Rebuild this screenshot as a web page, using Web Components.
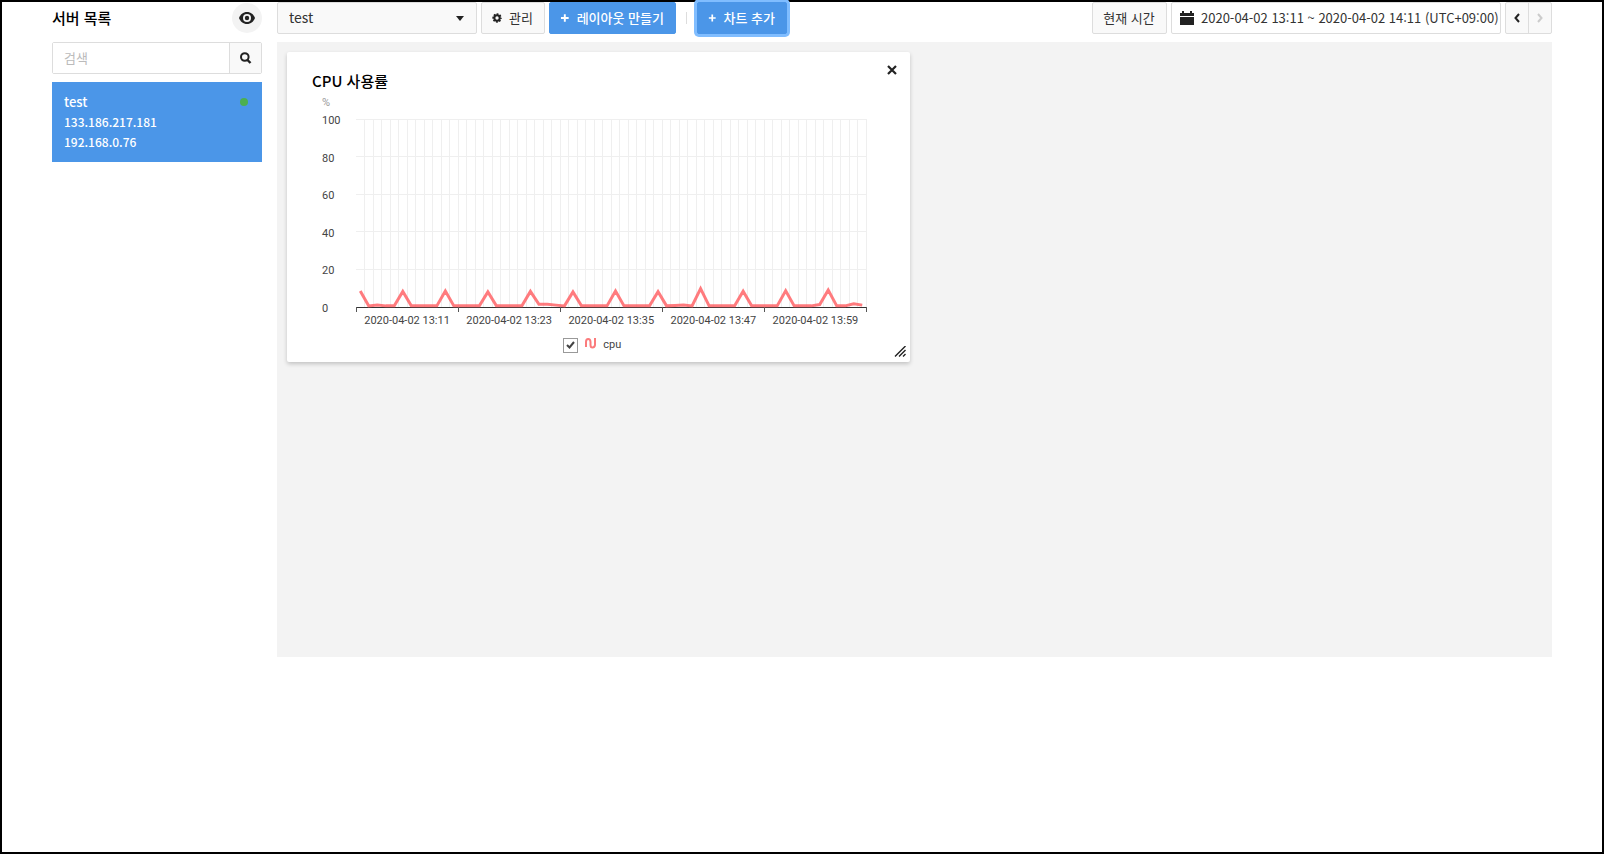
<!DOCTYPE html>
<html lang="ko">
<head>
<meta charset="utf-8">
<title>서버 모니터링</title>
<style>
html,body{margin:0;padding:0;background:#fff}
body{font-family:"Noto Sans CJK KR","Noto Sans",sans-serif;font-size:14px;line-height:20px;color:#333}
</style>
</head>
<body>
<monitor-app></monitor-app>
<script>
const base = `<style>
*{box-sizing:border-box}
button,input,select{font:inherit;color:inherit;margin:0}
svg{display:block}
button{cursor:pointer}
</style>`;

function define(name, html, setup) {
  const template = document.createElement('template');
  template.innerHTML = base + html;
  customElements.define(name, class extends HTMLElement {
    connectedCallback() {
      if (this.shadowRoot) return;
      this.attachShadow({ mode: 'open' }).append(template.content.cloneNode(true));
      if (setup) setup(this, this.shadowRoot);
    }
  });
}

define('ui-button', `<style>
:host{display:block}
button{display:flex;align-items:center;justify-content:center;gap:7px;width:100%;height:32px;padding:0 11px 1px 10px;border:1px solid #ddd;border-radius:2px;background:#f9f9f9;color:#333;font-size:13px;line-height:20px;white-space:nowrap}
:host([primary]) button{background:#4b96e8;border-color:#4b96e8;color:#fff;font-weight:500}
:host([active]) button{box-shadow:0 0 0 3px #80bdff}
</style><button type="button"><slot name="icon"></slot><slot></slot></button>`);

define('server-item', `<style>
:host{display:block;background:#4b96e8;color:#fff;padding:10px 12px;font-weight:500}
.name{display:flex;justify-content:space-between;align-items:center;font-size:13px;line-height:20px}
.dot{width:8px;height:8px;border-radius:50%;background:#4caf50;margin-right:2px}
.ip{font-size:12px;line-height:20px}
</style><div class="name"><slot name="name"></slot><span class="dot"></span></div><div class="ip"><slot name="public"></slot></div><div class="ip"><slot name="private"></slot></div>`);

define('server-list', `<style>
:host{display:flex;flex-direction:column;gap:8px;width:210px;flex:none}
header{display:flex;justify-content:space-between;align-items:center;height:32px}
h1{margin:0;font-size:15px;line-height:20px;font-weight:500;color:#000}
.eye{width:30px;height:30px;border:0;border-radius:50%;background:#f3f3f3;padding:0;display:grid;place-items:center}
form{display:flex;height:32px;border:1px solid #ddd;border-radius:2px}
input{flex:1;min-width:0;border:0;padding:0 11px;font-size:13px;background:#fff;outline:0}
input::placeholder{color:#bbb;opacity:1}
.go{width:32px;border:0;border-left:1px solid #ddd;background:#f9f9f9;padding:0;display:grid;place-items:center}
</style>
<header><h1>서버 목록</h1><button class="eye" aria-label="보기"><svg width="18" height="14" viewBox="0 0 18 14"><path d="M9 1C5.200 1 2.200 3.600 1 7c1.200 3.400 4.200 6 8 6s6.800-2.600 8-6c-1.200-3.400-4.200-6-8-6z" fill="#222"/><circle cx="9" cy="7" r="4" fill="#f3f3f3"/><circle cx="9" cy="7" r="2.200" fill="#222"/></svg></button></header>
<form><input type="text" placeholder="검색" aria-label="검색"><button type="button" class="go" aria-label="서버 검색"><svg width="12" height="12" viewBox="0 0 12 12" fill="none" stroke="#222"><circle cx="4.800" cy="5" r="3.800" stroke-width="2"/><path d="M7 7.500L10.500 11" stroke-width="2.400"/></svg></button></form>
<slot></slot>`);

define('layout-toolbar', `<style>
:host{display:flex;justify-content:space-between;height:32px;gap:8px}
.group{display:flex;gap:4px}
.select{display:flex;align-items:center;position:relative}
select{appearance:none;width:200px;height:32px;border:1px solid #ddd;border-radius:2px;background:#f9f9f9;padding:0 11px 2px;font-size:14px}
.caret{position:absolute;right:13px;pointer-events:none}
.bar{width:1px;height:12px;background:#ddd;margin:10px 6px 0}
.range{display:flex;align-items:center;gap:7px;width:330px;height:32px;border:1px solid #ddd;border-radius:2px;padding:0 0 0 8px;background:#fff;font-size:13px;white-space:nowrap}
.pager{display:flex;border:1px solid #ddd;border-radius:2px;background:#f9f9f9}
.pager button{width:22px;border:0;background:none;padding:0;display:grid;place-items:center}
.pager button+button{width:23px;border-left:1px solid #ddd}
</style>
<div class="group">
<div class="select"><select aria-label="레이아웃"><option>test</option></select><svg class="caret" width="8" height="5" viewBox="0 0 8 5"><path d="M0 0h8L4 5z" fill="#222"/></svg></div>
<ui-button style="width:64px"><svg slot="icon" width="12" height="12" viewBox="0 0 12 12"><g fill="none" stroke="#222"><circle cx="6" cy="6" r="3.200" stroke-width="2.400"/><circle cx="6" cy="6" r="4.600" stroke-width="2" stroke-dasharray="2.100 1.513" stroke-dashoffset="1.050"/></g></svg>관리</ui-button>
<ui-button primary style="width:127px"><svg slot="icon" width="10" height="10" viewBox="0 0 10 10"><path d="M5 1v8M1 5h8" stroke="#fff" stroke-width="2"/></svg>레이아웃 만들기</ui-button>
<span class="bar"></span>
<ui-button primary active style="width:90px"><svg slot="icon" width="10" height="10" viewBox="0 0 10 10"><path d="M5 1v8M1 5h8" stroke="#fff" stroke-width="2"/></svg>차트 추가</ui-button>
</div>
<div class="group">
<ui-button style="width:75px">현재 시간</ui-button>
<button type="button" class="range"><svg width="14" height="14" viewBox="0 0 14 14" fill="#222"><path d="M2 0h2v2h6V0h2v2h2v3H0V2h2zM0 6h14v8H0z"/></svg><span>2020-04-02 13:11 ~ 2020-04-02 14:11 (UTC+09:00)</span></button>
<div class="pager"><button type="button" aria-label="이전"><svg width="6" height="10" viewBox="0 0 6 10"><path d="M5 1L1.500 5 5 9" fill="none" stroke="#222" stroke-width="2"/></svg></button><button type="button" aria-label="다음"><svg width="6" height="10" viewBox="0 0 6 10"><path d="M1 1l3.500 4L1 9" fill="none" stroke="#ccc" stroke-width="2"/></svg></button></div>
</div>`);

define('line-chart', `<style>
:host{display:block;font-family:Roboto,sans-serif;font-size:11px;line-height:16px;color:#444}
.unit{height:21px;padding:3px 0 0 10px;color:#999}
.body{display:grid;grid-template-columns:44px 1fr;padding-right:6px}
.y{display:flex;flex-direction:column;justify-content:space-between;height:204px;padding-left:10px}
.plot{padding-top:6px}
.plot>svg{width:100%;height:196px;overflow:visible}
.x{grid-column:2;display:grid;grid-template-columns:repeat(5,1fr);text-align:center;white-space:nowrap;margin-top:-4px}
.legend{display:flex;justify-content:center;align-items:center;gap:7px;height:16px;margin-top:8px}
.legend input{appearance:none;width:15px;height:15px;border:1px solid #999;background:#fff}
label{display:flex;gap:7px;align-items:center}
.check{display:grid}
.check>*{grid-area:1/1;place-self:center}
.check svg{pointer-events:none}
</style>
<div class="unit">%</div>
<div class="body"><div class="y"></div><div class="plot"><svg role="img" aria-label="cpu"></svg></div><div class="x"></div></div>
<div class="legend"><label><span class="check"><input type="checkbox" checked><svg width="9" height="8" viewBox="0 0 9 8"><path d="M1 4l2.500 2.500L8 1" fill="none" stroke="#444" stroke-width="2"/></svg></span><svg width="11" height="14" viewBox="0 0 11 14"><path d="M1 9V4Q1 1 3.200 1T5.500 4v3q0 2.500 2 2.500t2.500-2.500V0" fill="none" stroke="#fb7b7c" stroke-width="2"/></svg><span>cpu</span></label></div>`,
(host, root) => {
  root.querySelector('.y').innerHTML = [100, 80, 60, 40, 20, 0].map(v => `<span>${v}</span>`).join('');
  root.querySelector('.x').innerHTML = ['13:11', '13:23', '13:35', '13:47', '13:59'].map(t => `<span>2020-04-02 ${t}</span>`).join('');
  const H = 188;
  const values = [];
  const peaks = [8.5, 8.3, 8.5, 8, 8.3, 8, 8.5, 8.1, 9.8, 8.4, 8.6, 9];
  for (let i = 0; i < 60; i++) values.push(i % 5 ? .6 : peaks[i / 5]);
  Object.assign(values, { 2: 1, 21: 1.4, 22: 1.4, 23: 1, 37: .8, 38: 1.1, 54: 1.3, 58: 1.7, 59: 1 });
  let s = '';
  for (let i = 1; i <= 60; i++) s += `<line x1="${i / 60 * 100}%" x2="${i / 60 * 100}%" y1="0" y2="${H}" stroke="#efefef" shape-rendering="crispEdges"/>`;
  for (let i = 0; i < 5; i++) s += `<line x1="0" x2="100%" y1="${i * H / 5}" y2="${i * H / 5}" stroke="#efefef" shape-rendering="crispEdges"/>`;
  const pts = values.map((v, i) => `${i + .5},${100 - v}`).join(' ');
  s += `<line x1="0" x2="100%" y1="${H}" y2="${H}" stroke="#333" shape-rendering="crispEdges"/>`;
  for (let i = 0; i <= 5; i++) s += `<line x1="${i * 20}%" x2="${i * 20}%" y1="${H}" y2="${H + 5}" stroke="#555" shape-rendering="crispEdges"/>`;
  s += `<svg width="100%" height="${H}" viewBox="0 0 60 100" preserveAspectRatio="none" overflow="visible"><polyline points="${pts}" fill="none" stroke="#ff5a5e" stroke-opacity=".8" stroke-width="3" vector-effect="non-scaling-stroke"/></svg>`;
  root.querySelector('.plot>svg').innerHTML = s;
});

define('chart-card', `<style>
:host{display:block;position:relative;height:310px;background:#fff;border-radius:2px;box-shadow:0 2px 4px rgba(0,0,0,.2);padding:18px 37px 0 25px}
h2{margin:0;font-size:15px;line-height:22px;font-weight:500;color:#000}
.close{position:absolute;right:13px;top:13px;width:10px;height:10px;padding:0;border:0;background:none}
.grip{position:absolute;right:4px;bottom:5px}
</style><h2><slot name="title"></slot></h2><slot></slot>
<button type="button" class="close" aria-label="닫기"><svg width="10" height="10" viewBox="0 0 10 10"><path d="M1 1l8 8M9 1L1 9" stroke="#222" stroke-width="2.200"/></svg></button>
<svg class="grip" width="12" height="11" viewBox="0 0 12 11"><path d="M1 10.500L11.500 0M5 10.500L11.500 4M9 10.500L11.500 8" stroke="#222" stroke-width="1.400"/></svg>`);

define('monitor-app', `<style>
:host{display:block;min-height:100vh;box-sizing:border-box;border:2px solid #000;padding:0 50px;background:#fff}
.page{display:flex;gap:15px}
main{flex:1;min-width:0;display:flex;flex-direction:column;gap:8px}
.board{background:#f3f3f3;min-height:615px;padding:10px;display:grid;grid-template-columns:1fr 1fr;gap:10px;align-items:start}
</style>
<div class="page">
<server-list><server-item><span slot="name">test</span><span slot="public">133.186.217.181</span><span slot="private">192.168.0.76</span></server-item></server-list>
<main><layout-toolbar></layout-toolbar><div class="board"><chart-card><span slot="title">CPU 사용률</span><line-chart></line-chart></chart-card></div></main>
</div>`);
</script>
</body>
</html>
